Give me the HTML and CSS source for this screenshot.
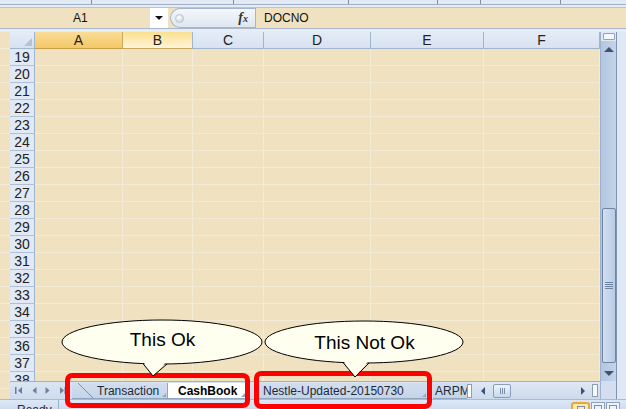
FILE: index.html
```html
<!DOCTYPE html>
<html>
<head>
<meta charset="utf-8">
<title>Excel sheet tabs</title>
<link rel="stylesheet" href="styles.css">
</head>
<body>
<div class="app">
  <div class="ribbon-edge"><span></span><span></span><span></span><span></span><span></span><span></span><span></span></div>
  <div class="ribbon-gap"></div>
  <div class="formula-row">
    <div class="namebox">A1</div>
    <div class="nb-drop"><span class="drop-tri"></span></div>
    <div class="fx-pill"><span class="knob"></span><span class="fx">f<small>x</small></span></div>
    <div class="formula-input">DOCNO</div>
  </div>
  <div class="hdr-gap"></div>
  <div class="workarea">
    <div class="left-margin"></div>
    <div class="sheet-left">
      <div class="colheads">
        <div class="corner"><span class="corner-tri"></span></div>
        <div class="ch w-a sel">A</div>
        <div class="ch w-b hov">B</div>
        <div class="ch w-c">C</div>
        <div class="ch w-d">D</div>
        <div class="ch w-e">E</div>
        <div class="ch w-f">F</div>
      </div>
      <div class="rows">
        <div class="rowheads">
          <div class="rh">19</div><div class="rh">20</div><div class="rh">21</div><div class="rh">22</div>
          <div class="rh">23</div><div class="rh">24</div><div class="rh">25</div><div class="rh">26</div>
          <div class="rh">27</div><div class="rh">28</div><div class="rh">29</div><div class="rh">30</div>
          <div class="rh">31</div><div class="rh">32</div><div class="rh">33</div><div class="rh">34</div>
          <div class="rh">35</div><div class="rh">36</div><div class="rh">37</div><div class="rh">38</div>
        </div>
        <div class="cells">
          <div class="col w-a"></div><div class="col w-b"></div><div class="col w-c"></div>
          <div class="col w-d"></div><div class="col w-e"></div><div class="col w-f"></div>
        </div>
      </div>
      <div class="tabbar">
        <div class="tabnav">
          <svg class="nav-first" width="8" height="7" viewBox="0 0 8 7"><rect x="0" y="0" width="1.5" height="7"/><path d="M7 0 L3 3.5 L7 7 Z"/></svg>
          <svg class="nav-prev" width="5" height="7" viewBox="0 0 5 7"><path d="M4.5 0 L0.5 3.5 L4.5 7 Z"/></svg>
          <svg class="nav-next" width="5" height="7" viewBox="0 0 5 7"><path d="M0.5 0 L4.5 3.5 L0.5 7 Z"/></svg>
          <svg class="nav-last" width="6" height="7" viewBox="0 0 6 7"><path d="M0 0 L4 3.5 L0 7 Z"/><rect x="4.5" y="0" width="1.5" height="7"/></svg>
        </div>
        <div class="tabs">
          <div class="tab tab-transaction"><span class="slant"></span><span class="tab-label">Transaction</span><span class="tab-mark"></span></div>
          <div class="tab tab-cash active"><span class="tab-label">CashBook</span><span class="tab-mark"></span></div>
          <div class="tab tab-nestle"><span class="tab-label">Nestle-Updated-20150730</span><span class="tab-mark"></span></div>
          <div class="tab tab-arpm"><span class="tab-label">ARPM</span></div>
        </div>
        <div class="split"></div>
        <div class="hscroll">
          <span class="arr-l"></span>
          <span class="hthumb"><i></i><i></i><i></i></span>
          <span class="htrack"></span>
          <span class="arr-r"></span>
          <span class="hbox"></span>
        </div>
      </div>
    </div>
    <div class="vscroll">
      <div class="vs-split"><span></span></div>
      <div class="vs-btn"><span class="arr-up"></span></div>
      <div class="vs-track"></div>
      <div class="vs-thumb"><i></i><i></i><i></i><i></i></div>
      <div class="vs-gap"></div>
      <div class="vs-btn"><span class="arr-down"></span></div>
      <div class="vs-fill"></div>
    </div>
    <div class="right-edge"></div>
  </div>
  <div class="statusbar">
    <div class="status-text">Ready</div>
    <div class="views">
      <span class="vbtn on"><i></i></span>
      <span class="vbtn"><i></i></span>
      <span class="vbtn"><i></i></span>
    </div>
  </div>
</div>

<div class="mark mark-1"></div>
<div class="mark mark-2"></div>

<div class="callout callout-1">
  <svg width="203" height="60" viewBox="0 0 203 60">
    <ellipse cx="101" cy="23" rx="100" ry="22" class="b-fill b-stroke"/>
    <polygon points="81,41 92,57 107,41" class="b-fill"/>
    <polyline points="82,44.6 92,57 106,45" class="b-stroke b-line"/>
  </svg>
  <div class="callout-text t1">This Ok</div>
</div>

<div class="callout callout-2">
  <svg width="203" height="60" viewBox="0 0 203 60">
    <ellipse cx="101" cy="23" rx="99" ry="21" class="b-fill b-stroke"/>
    <polygon points="79,40 92,58 107,40" class="b-fill"/>
    <polyline points="80,43.5 92,58 106,44" class="b-stroke b-line"/>
  </svg>
  <div class="callout-text t2">This Not Ok</div>
</div>
</body>
</html>
```

FILE: styles.css
```css
* { box-sizing: border-box; margin: 0; padding: 0; }
html, body { width: 626px; height: 409px; overflow: hidden; }
body {
  font-family: "Liberation Sans", Arial, sans-serif;
  background: #f0e1c0;
  color: #000;
  position: relative;
}
.app { display: flex; flex-direction: column; width: 626px; height: 409px; }

/* ribbon remnant */
.ribbon-edge {
  display: grid;
  grid-template-columns: 92px 142px 115px 89px 43px 80px 1fr;
  height: 5px;
  background: #e2e9f2;
  border-bottom: 1px solid #9fb1c8;
}
.ribbon-edge span { border-right: 1px solid #7f8fa5; }
.ribbon-edge span:last-child { border-right: none; }
.ribbon-gap { height: 2px; background: #e4ebf4; }

/* formula bar */
.formula-row {
  display: flex;
  height: 22px;
  background: #f0e1c0;
  border-top: 1px solid #b6c4d6;
  border-bottom: 1px solid #a7b8ce;
  font-size: 12px;
  color: #111;
}
.namebox { width: 150px; padding-left: 73px; display: flex; align-items: center; }
.nb-drop { width: 18px; background: #fff; display: flex; align-items: center; justify-content: center; }
.drop-tri { width: 0; height: 0; border-left: 4px solid transparent; border-right: 4px solid transparent; border-top: 4px solid #111; }
.fx-pill {
  width: 85px;
  margin-left: 2px;
  display: flex;
  align-items: center;
  justify-content: space-between;
  padding: 0 7px 0 4px;
  background: linear-gradient(#f4f7fb, #dfe6ef);
  border: 1px solid #a6b6ca;
  border-right: none;
  border-radius: 10px 0 0 10px;
}
.knob { width: 9px; height: 9px; border-radius: 50%; background: radial-gradient(circle at 40% 35%, #fff, #c3ccd7); border: 1px solid #b9c3cf; }
.fx { font-family: "Liberation Serif", serif; font-style: italic; font-weight: bold; font-size: 14px; color: #333; }
.fx small { font-size: 10px; }
.formula-input { flex: 1; display: flex; align-items: center; padding-left: 8px; border-left: 1px solid #a6b6ca; }
.hdr-gap { height: 3px; background: #e7edf5; }

/* work area */
.workarea { display: flex; height: 367px; }
.left-margin { width: 10px; background: repeating-linear-gradient(#f0e1c0 0 16px, #f4ead8 16px 17px); }
.sheet-left { width: 590px; display: flex; flex-direction: column; }

.w-a { width: 88px; }
.w-b { width: 70px; }
.w-c { width: 71px; }
.w-d { width: 107px; }
.w-e { width: 113px; }
.w-f { width: 116px; }

.colheads { display: flex; height: 17px; font-size: 14px; flex: none; }
.corner {
  width: 25px;
  background: linear-gradient(#e4ecf7, #d6e2f1);
  border-right: 1px solid #9eb6ce;
  border-bottom: 1px solid #9eb6ce;
  display: flex;
  align-items: flex-end;
  justify-content: flex-end;
  padding: 0 2px 2px 0;
}
.corner-tri { width: 0; height: 0; border-left: 8px solid transparent; border-bottom: 8px solid #b3c3d7; }
.ch {
  display: flex;
  align-items: center;
  justify-content: center;
  background: linear-gradient(#e3ebf6, #d8e3f1);
  border-right: 1px solid #9eb6ce;
  border-bottom: 1px solid #9eb6ce;
  color: #222;
}
.ch.sel { background: linear-gradient(#fadc98, #f4c866); border-right-color: #c9a862; border-bottom-color: #c79d45; }
.ch.hov { background: linear-gradient(#fbe090, #fff4d6); border-bottom-color: #c9a862; }

.rows { display: flex; height: 332px; overflow: hidden; flex: none; }
.rowheads { width: 25px; display: flex; flex-direction: column; flex: none; }
.rh {
  height: 17px;
  flex: none;
  display: flex;
  align-items: center;
  justify-content: center;
  font-size: 14px;
  color: #222;
  background: #e0e9f5;
  border-right: 1px solid #9eb6ce;
  border-bottom: 1px solid #adc0d7;
}
.cells { flex: 1; display: flex; background: repeating-linear-gradient(#f0e1c0 0 16px, #f4ead8 16px 17px); }
.col { border-right: 1px solid #f4ead8; }

/* sheet tabs */
.tabbar {
  height: 18px;
  flex: none;
  display: flex;
  background: linear-gradient(#dbe5f2, #cfdcee);
  border-top: 1px solid #9cb0c9;
  font-size: 12px;
}
.tabnav { width: 56px; display: flex; align-items: center; padding-left: 5px; fill: #6c809e; }
.nav-prev { margin-left: 9px; }
.nav-next { margin-left: 8px; }
.nav-last { margin-left: 10px; }
.tabs { width: 401px; display: flex; padding-left: 6px; overflow: hidden; }
.tab {
  display: flex;
  align-items: center;
  height: 16px;
  margin-top: 1px;
  background: linear-gradient(#d2deee, #c5d4e8);
  border-right: 1px solid #8fa4bf;
  border-bottom: 1px solid #8fa4bf;
  color: #1d2a3a;
  flex: none;
  white-space: nowrap;
}
.tab.active { background: #fff; font-weight: bold; color: #000; }
.tab-transaction { width: 96px; padding-left: 6px; }
.tab-cash { width: 79px; padding-left: 10px; }
.tab-nestle { width: 173px; padding-left: 8px; margin-left: 8px; }
.tab-arpm { width: 34px; padding-left: 2px; margin-left: 5px; overflow: hidden; border-right: none; }
.slant {
  width: 15px;
  height: 15px;
  margin-right: 4px;
  background: linear-gradient(to top right, transparent calc(50% - 0.6px), #7e8fa6 50%, transparent calc(50% + 0.6px));
}
.tab-mark {
  margin-left: auto;
  margin-right: 1px;
  align-self: flex-end;
  margin-bottom: 1px;
  width: 0;
  height: 0;
  border-left: 4px solid transparent;
  border-bottom: 4px solid #97a8bd;
}
.split { width: 5px; margin: 2px 0 1px; background: #fff; border: 1px solid #8c9db3; }
.hscroll { width: 128px; display: flex; align-items: center; background: linear-gradient(#dfe8f4, #ccdaeb); }
.arr-l { margin-left: 9px; width: 0; height: 0; border-top: 4px solid transparent; border-bottom: 4px solid transparent; border-right: 4px solid #3d5374; }
.hthumb {
  margin-left: 8px;
  width: 18px;
  height: 14px;
  border: 1px solid #8a9db8;
  border-radius: 2px;
  background: linear-gradient(#eef3fa, #c9d8eb);
  display: flex;
  justify-content: center;
  align-items: center;
  gap: 1px;
}
.hthumb i { width: 1px; height: 6px; background: #7d90ab; }
.htrack { flex: 1; }
.arr-r { width: 0; height: 0; border-top: 4px solid transparent; border-bottom: 4px solid transparent; border-left: 4px solid #3d5374; }
.hbox { margin-left: 7px; margin-right: 2px; width: 6px; height: 13px; background: #f6f9fc; border: 1px solid #8c9db3; }

/* vertical scrollbar */
.vscroll {
  width: 16px;
  display: flex;
  flex-direction: column;
  align-items: center;
  background: linear-gradient(90deg, #b3c6df, #c3d3e8);
  border-left: 1px solid #9db1cb;
}
.vs-split { height: 9px; width: 100%; display: flex; align-items: center; justify-content: center; background: #dfe8f4; }
.vs-split span { width: 12px; height: 7px; background: #f4f7fb; border: 1px solid #8ea2bc; border-radius: 1px; }
.vs-btn { height: 16px; width: 100%; display: flex; align-items: center; justify-content: center; }
.arr-up { width: 0; height: 0; border-left: 5px solid transparent; border-right: 5px solid transparent; border-bottom: 5px solid #3d5374; }
.arr-down { width: 0; height: 0; border-left: 5px solid transparent; border-right: 5px solid transparent; border-top: 5px solid #3d5374; }
.vs-track { height: 151px; }
.vs-thumb {
  width: 14px;
  height: 155px;
  border: 1px solid #6f84a4;
  border-radius: 2px;
  background: linear-gradient(90deg, #d2dff0, #b9cbe3);
  display: flex;
  flex-direction: column;
  align-items: center;
  justify-content: center;
  gap: 1px;
}
.vs-thumb i { width: 8px; height: 1px; background: #6f84a4; }
.vs-gap { height: 2px; }
.vs-fill { height: 18px; width: 100%; background: #d3dff0; }
.right-edge { width: 10px; background: #dfe9f6; border-left: 1px solid #7f93ad; }

/* status bar */
.statusbar {
  height: 10px;
  display: flex;
  background: linear-gradient(#dde8f6, #cfdcef);
  border-top: 1px solid #a9bbd2;
  font-size: 12px;
  line-height: 12px;
  overflow: hidden;
  color: #1d2a3a;
}
.status-text { width: 59px; padding: 4px 0 0 17px; border-right: 1px solid #9fb3cc; }
.views { margin-left: auto; margin-right: 6px; display: flex; gap: 1px; align-items: flex-start; padding-top: 2px; }
.vbtn { width: 14px; height: 12px; border: 1px solid #8fa3bf; background: #eef3f9; display: flex; justify-content: center; padding-top: 2px; }
.vbtn i { width: 8px; height: 6px; border: 1px solid #7d90ab; }
.vbtn.on { width: 19px; border: 2px solid #e6a73c; border-radius: 3px; background: #fde9a8; }

/* annotations */
.mark { position: absolute; border: 5px solid #ff0000; border-radius: 7px; }
.mark-1 { left: 65px; top: 373px; width: 185px; height: 35px; }
.mark-2 { left: 254px; top: 371px; width: 178px; height: 38px; }

.callout { position: absolute; width: 203px; height: 60px; }
.callout svg { position: absolute; left: 0; top: 0; }
.callout-1 { left: 61px; top: 319px; }
.callout-2 { left: 263px; top: 319px; }
.b-fill { fill: #fffff0; }
.b-stroke { stroke: #000; stroke-width: 1; }
.b-line { fill: none; }
.callout-text {
  position: absolute;
  left: 0;
  right: 0;
  text-align: center;
  font-size: 19px;
  line-height: 19px;
  color: #000;
}
.t1 { top: 11px; }
.t2 { top: 14px; }
```
